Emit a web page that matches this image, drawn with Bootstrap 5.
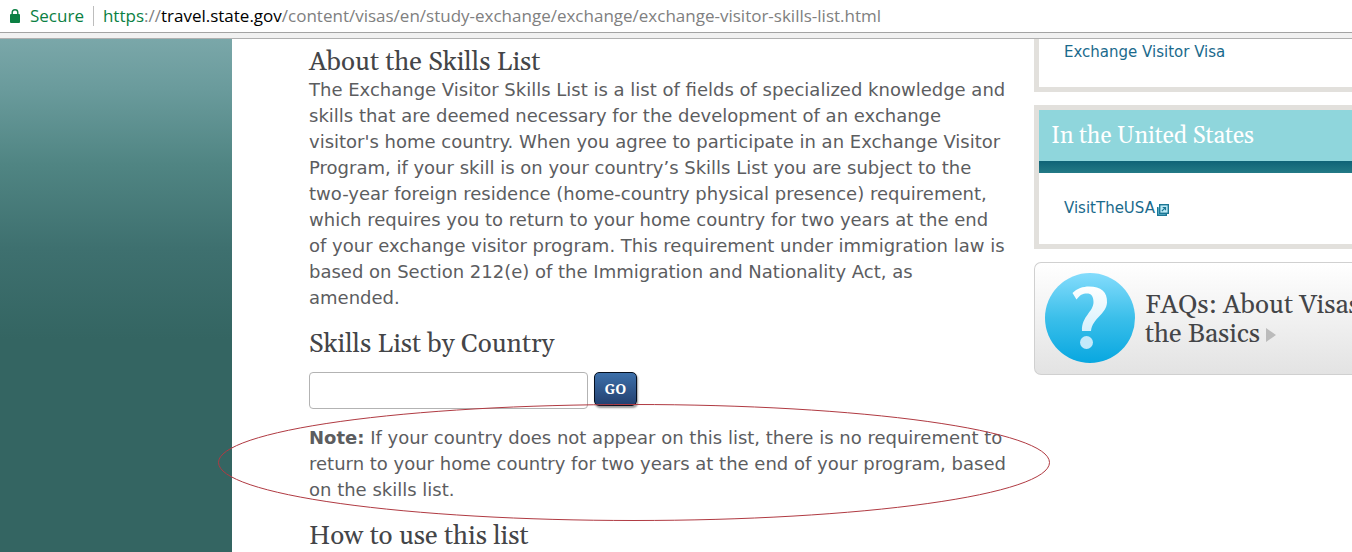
<!DOCTYPE html>
<html lang="en">
<head>
<meta charset="utf-8">
<meta name="viewport" content="width=device-width, initial-scale=1">
<title>Exchange Visitor Skills List</title>
<link href="https://cdn.jsdelivr.net/npm/bootstrap@5.3.0/dist/css/bootstrap.min.css" rel="stylesheet">
<style>
  body { font-family: "DejaVu Sans", Verdana, sans-serif; color: #5c5d5f; background: #fff; overflow: hidden; }
  .address-bar { height: 33px; border-bottom: 1px solid #a3a3a3; font: 17px/32px "Open Sans", "Segoe UI", sans-serif; color: #808080; padding-left: 10px; white-space: nowrap; }
  .secure, .scheme { color: #0b8043; }
  .secure { margin-left: 10px; }
  .divider { width: 1px; height: 20px; background: #bdbdbd; margin: 0 9px; }
  .host { color: #000; }
  .toolbar-edge { height: 6px; background: #f1f1f1; border-bottom: 1px solid #b0b0b0; }
  .side-band { width: 232px; background: linear-gradient(#7aa7a9 0, #6a9b9c 50px, #508583 125px, #3e706f 210px, #346562 300px, #346562 100%); }
  .article { padding: 10px 24px 0 77px; font-size: 18px; line-height: 26px; min-width: 0; }
  .serif-title { font-family: Georgia, Gelasio, "Liberation Serif", serif; font-size: 26px; line-height: 28px; color: #444548; font-weight: 400; margin: 0; }
  .intro { margin-bottom: 20px; }
  .country-form { margin-top: 13px; gap: 6px; }
  .country-input { width: 279px; height: 37px; border: 1px solid #b3b3b3; border-radius: 4px; }
  .go-btn { width: 43px; height: 34px; padding: 0; border: 1px solid #050f1f; border-radius: 5px; background: linear-gradient(#3d70aa, #23406f); color: #fff; font: bold 14px/20px "Noto Serif", "DejaVu Serif", Georgia, serif; box-shadow: 1px 2px 2px #999; }
  .go-btn:hover { color: #fff; background: #23406f; }
  .note { margin: 16px 0 20px; }
  .ring { left: -92px; top: -22px; width: 834px; height: 119px; pointer-events: none; }
  .aside-col { width: 318px; font-size: 15px; line-height: 22px; }
  .aside-col a { color: #1a6a8c; text-decoration: none; }
  .panel { border: 5px solid #e2e0dc; border-right: 0; padding-left: 25px; margin-bottom: 13px; }
  .panel-first { border-top: 0; padding-top: 2px; height: 53px; }
  .panel-title { margin-left: -25px; padding: 12px 12px; height: 51px; background: #8fd6dc; color: #fff; font-size: 23px; line-height: 30px; }
  .panel-strip { margin-left: -25px; height: 12px; background: linear-gradient(#0f6377, #237a86); }
  .panel-body { padding: 24px 0 25px; gap: 2px; }
  .panel-body svg { margin-top: 4px; }
  .faq { height: 113px; border: 1px solid #d0d0d0; border-right: 0; border-radius: 7px 0 0 7px; background: linear-gradient(#fff, #e3e3e3); padding: 0 0 2px 10px; gap: 10px; }
  .aside-col .faq { color: #444548; }
  .faq-text { line-height: 29px; padding-top: 4px; }
</style>
<script src="https://cdn.jsdelivr.net/npm/bootstrap@5.3.0/dist/js/bootstrap.bundle.min.js"></script>
</head>
<body class="d-flex flex-column vh-100">
<header>
  <div class="address-bar d-flex align-items-center">
    <svg width="10" height="14" viewBox="0 0 10 14" aria-hidden="true"><path d="M2.2 6V3.5a2.8 2.8 0 0 1 5.6 0V6" fill="none" stroke="#0b8043" stroke-width="1.4"/><rect y="5" width="10" height="9" rx="1" fill="#0b8043"/></svg>
    <span class="secure">Secure</span>
    <span class="divider"></span>
    <span><span class="scheme">https</span>://<span class="host">travel.state.gov</span>/content/visas/en/study-exchange/exchange/exchange-visitor-skills-list.html</span>
  </div>
  <div class="toolbar-edge"></div>
</header>
<div class="d-flex flex-grow-1">
  <div class="side-band flex-shrink-0"></div>
  <main class="article flex-grow-1">
    <h2 class="serif-title">About the Skills List</h2>
    <p class="intro">The Exchange Visitor Skills List is a list of fields of specialized knowledge and skills that are deemed necessary for the development of an exchange visitor's home country. When you agree to participate in an Exchange Visitor Program, if your skill is on your country’s Skills List you are subject to the two-year foreign residence (home-country physical presence) requirement, which requires you to return to your home country for two years at the end of your exchange visitor program. This requirement under immigration law is based on Section 212(e) of the Immigration and Nationality Act, as<br>amended.</p>
    <h2 class="serif-title" id="country-title">Skills List by Country</h2>
    <form class="country-form d-flex align-items-start">
      <input class="country-input" type="text" aria-labelledby="country-title">
      <button class="btn go-btn" type="button">GO</button>
    </form>
    <div class="note position-relative">
      <p class="mb-0"><b>Note:</b> If your country does not appear on this list, there is no requirement to return to your home country for two years at the end of your program, based on the skills list.</p>
      <svg class="ring position-absolute" viewBox="0 0 834 119" aria-hidden="true"><ellipse cx="417" cy="59.500" rx="415.500" ry="58" fill="none" stroke="#b03a42" stroke-width="1"/></svg>
    </div>
    <h2 class="serif-title">How to use this list</h2>
  </main>
  <aside class="aside-col flex-shrink-0 overflow-hidden">
    <div class="panel panel-first"><a href="#">Exchange Visitor Visa</a></div>
    <section class="panel">
      <h3 class="serif-title panel-title">In the United States</h3>
      <div class="panel-strip"></div>
      <div class="panel-body d-flex align-items-center"><a href="#">VisitTheUSA</a>
        <svg width="12" height="12" viewBox="0 0 12 12" aria-hidden="true"><path d="M.7 3v8.300H9.300V10" fill="#7fd0e6" stroke="#1c7795" stroke-width="1.400"/><rect x="2.700" y=".7" width="8.600" height="8.600" fill="#bdeaf6" stroke="#1c7795" stroke-width="1.400"/><path d="M4.800 7.200 8 4M5.700 3.500h2.800v2.800" fill="none" stroke="#1c7795" stroke-width="1.200"/></svg></div>
    </section>
    <a href="#" class="faq d-flex align-items-center">
      <svg class="flex-shrink-0" width="90" height="90" viewBox="0 0 90 90" aria-hidden="true">
        <defs><linearGradient id="ball" x2="0" y2="1"><stop stop-color="#84dcfc"/><stop offset=".5" stop-color="#3bbfea"/><stop offset="1" stop-color="#08a7e0"/></linearGradient>
        <linearGradient id="hook" x2="0" y2="1"><stop stop-color="#fff"/><stop offset="1" stop-color="#d6f0fc"/></linearGradient></defs>
        <circle cx="45" cy="45" r="45" fill="url(#ball)"/>
        <path d="M27.500 20C32 15.500 38 13.500 44 13.500 56 13.500 62.500 19 62 29.500 61.500 41 47.500 45 46 58H37C36.500 43 48.500 39 48.500 29 48.500 23 46 20.500 42 20.500 37.500 20.500 35 22 31.500 26.500Z" fill="url(#hook)"/>
        <circle cx="41.500" cy="69.500" r="6.500" fill="#c4e9fa"/>
      </svg>
      <span class="serif-title faq-text text-nowrap">FAQs: About Visas<br>the Basics <svg width="10" height="14" viewBox="0 0 10 14" aria-hidden="true"><path d="M0 0 10 7 0 14Z" fill="#bbb"/></svg></span>
    </a>
  </aside>
</div>
</body>
</html>
